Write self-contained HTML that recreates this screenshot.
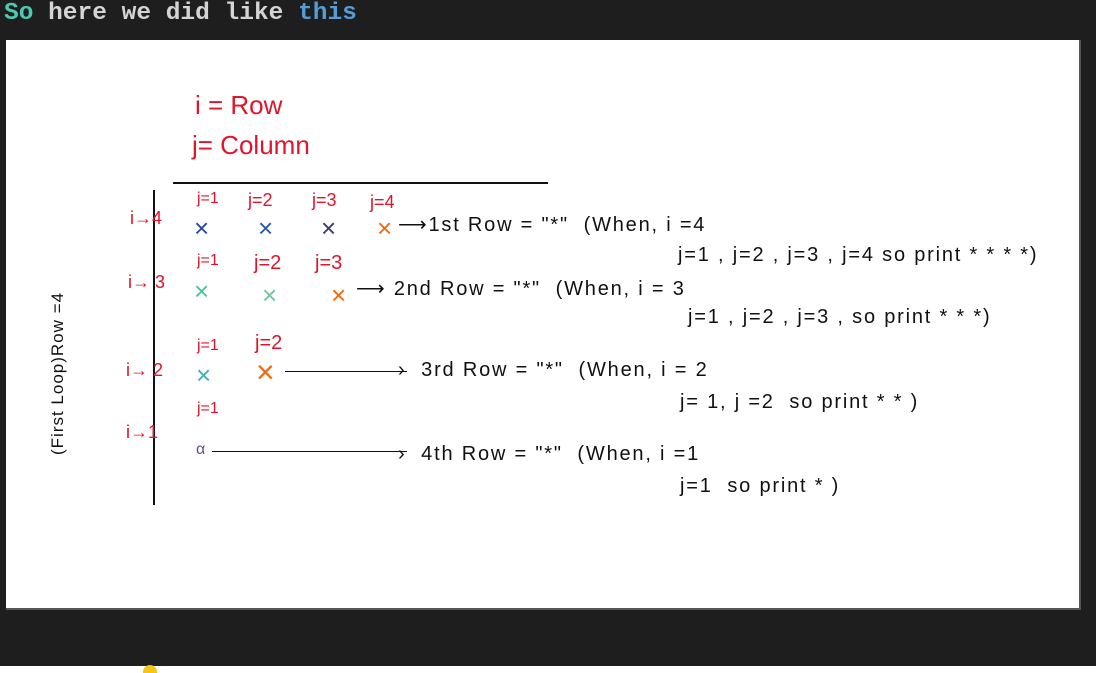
<!DOCTYPE html>
<html><head><meta charset="utf-8"><style>
body{margin:0;width:1101px;height:670px;background:#fff;position:relative;overflow:hidden;font-family:"Liberation Sans",sans-serif}
.dark{position:absolute;left:0;top:0;width:1096px;height:666px;background:#1e1e1e}
.hdr{position:absolute;left:4px;top:0px;font:bold 24.5px "Liberation Mono",monospace;color:#d4d4d4}
.img{position:absolute;left:6px;top:40px;width:1073px;height:568px;background:#fff;border-right:2px solid #555;border-bottom:2px solid #555}
.t{position:absolute;white-space:nowrap}
.r{color:#e0142a}
.k{color:#111;font-size:20px;letter-spacing:1.8px}
.x{position:absolute;font-size:26px;line-height:26px}
.ln{position:absolute;background:#111}
</style></head><body>
<div class="dark"></div>
<div class="hdr"><span style="color:#4ec9b0">So</span> here we did like <span style="color:#569cd6">this</span></div>
<div class="img"></div>
<div class="t r" style="left:195px;top:90px;font-size:26px">i = Row</div>
<div class="t r" style="left:192px;top:130px;font-size:26px">j= Column</div>
<div class="ln" style="left:173px;top:182px;width:375px;height:2px"></div>
<div class="ln" style="left:153px;top:190px;width:2px;height:315px"></div>
<div class="t" style="left:48px;top:455px;transform:rotate(-90deg);transform-origin:0 0;font-size:17px;color:#111;letter-spacing:1px">(First Loop)Row =4</div>

<div class="t r" style="left:197px;top:190px;font-size:16px">j=1</div>
<div class="t r" style="left:248px;top:190px;font-size:18px">j=2</div>
<div class="t r" style="left:312px;top:190px;font-size:18px">j=3</div>
<div class="t r" style="left:370px;top:192px;font-size:18px">j=4</div>
<div class="t r" style="left:130px;top:208px;font-size:18px">i→4</div>
<div class="x" style="left:194px;top:215px;color:#2b4a9c">×</div>
<div class="x" style="left:258px;top:215px;color:#2b5aa8">×</div>
<div class="x" style="left:321px;top:215px;color:#3a3a7a">×</div>
<div class="x" style="left:377px;top:215px;color:#f06b10">×</div>
<div class="t k" style="left:398px;top:212px">⟶1st Row = "*"&nbsp;&nbsp;(When, i =4</div>
<div class="t k" style="left:678px;top:244px">j=1 , j=2 , j=3 , j=4 so print * * * *)</div>

<div class="t r" style="left:197px;top:252px;font-size:16px">j=1</div>
<div class="t r" style="left:254px;top:252px;font-size:20px">j=2</div>
<div class="t r" style="left:315px;top:252px;font-size:20px">j=3</div>
<div class="t r" style="left:128px;top:272px;font-size:18px">i→ 3</div>
<div class="x" style="left:194px;top:278px;color:#4cc0a0">×</div>
<div class="x" style="left:262px;top:282px;color:#6cc8a0">×</div>
<div class="x" style="left:331px;top:282px;color:#f06b10">×</div>
<div class="t k" style="left:356px;top:276px">⟶ 2nd Row = "*"&nbsp;&nbsp;(When, i = 3</div>
<div class="t k" style="left:688px;top:306px">j=1 , j=2 , j=3 , so print * * *)</div>

<div class="t r" style="left:197px;top:337px;font-size:16px">j=1</div>
<div class="t r" style="left:255px;top:332px;font-size:20px">j=2</div>
<div class="t r" style="left:126px;top:360px;font-size:18px">i→ 2</div>
<div class="x" style="left:196px;top:362px;color:#3ab0c0">×</div>
<div class="x" style="left:256px;top:359px;color:#f06b10;font-size:32px">×</div>
<div class="ln" style="left:285px;top:371px;width:122px;height:1px"></div>
<div class="t k" style="left:398px;top:359px">›&nbsp;&nbsp;3rd Row = "*"&nbsp;&nbsp;(When, i = 2</div>
<div class="t k" style="left:680px;top:391px">j= 1, j =2&nbsp;&nbsp;so print * * )</div>

<div class="t r" style="left:197px;top:400px;font-size:16px">j=1</div>
<div class="t r" style="left:126px;top:422px;font-size:18px">i→1</div>
<div class="x" style="left:196px;top:437px;color:#6a4a8a;font-size:16px">α</div>
<div class="ln" style="left:212px;top:451px;width:195px;height:1px"></div>
<div class="t k" style="left:398px;top:443px">›&nbsp;&nbsp;4th Row = "*"&nbsp;&nbsp;(When, i =1</div>
<div class="t k" style="left:680px;top:475px">j=1&nbsp;&nbsp;so print * )</div>
<div style="position:absolute;left:143px;top:665px;width:14px;height:8px;border-radius:7px 7px 0 0;background:#f5c518"></div>
</body></html>
